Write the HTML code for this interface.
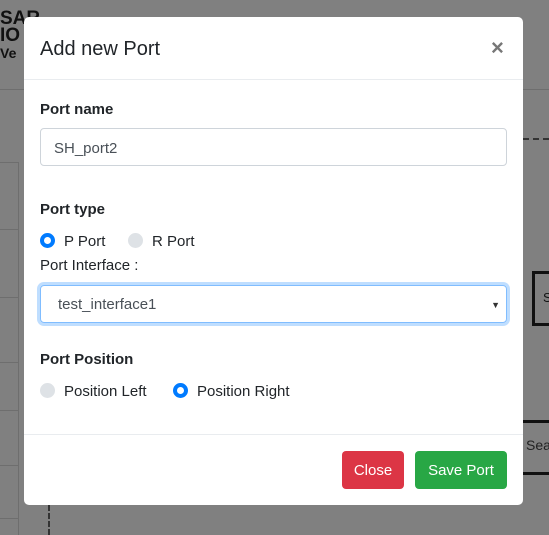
<!DOCTYPE html>
<html><head><style>
*{box-sizing:border-box;margin:0;padding:0}
body{width:549px;height:535px;background:#808080;position:relative;overflow:hidden;font-family:"Liberation Sans",sans-serif;color:#212529}
.a{position:absolute}
.m{left:24px;top:17px;width:499px;height:488px;background:#fff;border-radius:5px}
.lbl{font-weight:bold;font-size:15px}
.t{font-size:15px}
.rad{width:15px;height:15px;border-radius:50%;background:#dee2e6}
.on{background:#fff;border:4.5px solid #007bff}
</style></head><body>
<div class="a" style="left:0;top:10px;font:bold 19px/17px 'Liberation Sans';color:#111">SAR<br>IO<br><span style="font-size:14px">Ve</span></div>
<div class="a" style="left:0;top:89px;width:549px;height:1px;background:#6e6e6e"></div>
<div class="a" style="left:18px;top:162px;width:1px;height:373px;background:#6e6e6e"></div>
<div class="a" style="left:0;top:162px;width:18px;height:1px;background:#6e6e6e"></div>
<div class="a" style="left:0;top:229px;width:18px;height:1px;background:#6e6e6e"></div>
<div class="a" style="left:0;top:297px;width:18px;height:1px;background:#6e6e6e"></div>
<div class="a" style="left:0;top:362px;width:18px;height:1px;background:#6e6e6e"></div>
<div class="a" style="left:0;top:410px;width:18px;height:1px;background:#6e6e6e"></div>
<div class="a" style="left:0;top:465px;width:18px;height:1px;background:#6e6e6e"></div>
<div class="a" style="left:0;top:518px;width:18px;height:1px;background:#6e6e6e"></div>
<div class="a" style="left:48px;top:505px;width:0;height:30px;border-left:2px dashed #333"></div>
<div class="a" style="left:523px;top:138px;width:26px;border-top:2px dashed #333"></div>
<div class="a" style="left:532px;top:271px;width:20px;height:55px;border:3px solid #111;border-right:none"></div>
<div class="a" style="left:543px;top:290px;font-size:13px;color:#111">S</div>
<div class="a" style="left:523px;top:420px;width:26px;height:55px;border-top:3px solid #111;border-bottom:3px solid #111"></div>
<div class="a" style="left:526px;top:437px;font-size:14px;color:#222">Sea</div>

<div class="a m">
<div class="a" style="left:16px;top:21px;font-size:20px;color:#212529">Add new Port</div>
<div class="a" style="left:467px;top:18px;font-size:22px;color:#777;font-weight:bold">×</div>
<div class="a" style="left:0;top:62px;width:499px;height:1px;background:#e9ecef"></div>
<div class="a lbl" style="left:16px;top:84px">Port name</div>
<div class="a" style="left:16px;top:111px;width:467px;height:38px;border:1px solid #ced4da;border-radius:4px;padding:0 13px;line-height:40px;font-size:15px;color:#495057">SH_port2</div>
<div class="a lbl" style="left:16px;top:184px">Port type</div>
<div class="a rad on" style="left:16px;top:216px"></div>
<div class="a t" style="left:40px;top:216px">P Port</div>
<div class="a rad" style="left:104px;top:216px"></div>
<div class="a t" style="left:128px;top:216px">R Port</div>
<div class="a t" style="left:16px;top:240px">Port Interface :</div>
<div class="a" style="left:16px;top:268px;width:467px;height:38px;border:1px solid #80bdff;border-radius:4px;box-shadow:0 0 0 3px rgba(0,123,255,.25);padding:0 17px;line-height:38px;font-size:15px;color:#495057">test_interface1<span style="position:absolute;right:6px;top:0;font-size:9px;color:#333">▼</span></div>
<div class="a lbl" style="left:16px;top:334px">Port Position</div>
<div class="a rad" style="left:16px;top:366px"></div>
<div class="a t" style="left:40px;top:366px">Position Left</div>
<div class="a rad on" style="left:149px;top:366px"></div>
<div class="a t" style="left:173px;top:366px">Position Right</div>
<div class="a" style="left:0;top:417px;width:499px;height:1px;background:#e9ecef"></div>
<div class="a" style="left:318px;top:434px;width:62px;height:38px;background:#dc3545;border-radius:4px;color:#fff;font-size:15px;text-align:center;line-height:40px">Close</div>
<div class="a" style="left:391px;top:434px;width:92px;height:38px;background:#28a745;border-radius:4px;color:#fff;font-size:15px;text-align:center;line-height:40px">Save Port</div>
</div>
</body></html>
